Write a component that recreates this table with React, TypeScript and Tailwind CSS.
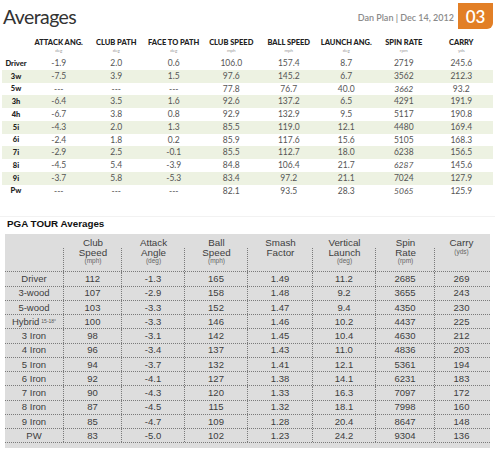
import React from 'react'

const topHeaders = [
    ["ATTACK ANG.", "deg"],
    ["CLUB PATH", "deg"],
    ["FACE TO PATH", "deg"],
    ["CLUB SPEED", "mph"],
    ["BALL SPEED", "mph"],
    ["LAUNCH ANG.", "deg"],
    ["SPIN RATE", "rpm"],
    ["CARRY", "yds"],
]

const clubs = [
    ["Driver", "-1.9", "2.0", "0.6", "106.0", "157.4", "8.7", "2719", "245.6"],
    ["3w", "-7.5", "3.9", "1.5", "97.6", "145.2", "6.7", "3562", "212.3"],
    ["5w", "---", "---", "---", "77.8", "76.7", "40.0", "*3662", "93.2"],
    ["3h", "-6.4", "3.5", "1.6", "92.6", "137.2", "6.5", "4291", "191.9"],
    ["4h", "-6.7", "3.8", "0.8", "92.9", "132.9", "9.5", "5117", "190.8"],
    ["5i", "-4.3", "2.0", "1.3", "85.5", "119.0", "12.1", "4480", "169.4"],
    ["6i", "-2.4", "1.8", "0.2", "85.9", "117.6", "15.6", "5105", "168.3"],
    ["7i", "-2.9", "2.5", "-0.1", "85.5", "112.7", "18.0", "6238", "156.5"],
    ["8i", "-4.5", "5.4", "-3.9", "84.8", "106.4", "21.7", "*6287", "145.6"],
    ["9i", "-3.7", "5.8", "-5.3", "83.4", "97.2", "21.1", "7024", "127.9"],
    ["Pw", "---", "---", "---", "82.1", "93.5", "28.3", "*5065", "125.9"],
]

const pgaHeaders: [string[], string][] = [
    [["Club", "Speed"], "(mph)"],
    [["Attack", "Angle"], "(deg)"],
    [["Ball", "Speed"], "(mph)"],
    [["Smash", "Factor"], ""],
    [["Vertical", "Launch"], "(deg)"],
    [["Spin", "Rate"], "(rpm)"],
    [["Carry"], "(yds)"],
]

const pgaRows = [
    ["Driver", "112", "-1.3", "165", "1.49", "11.2", "2685", "269"],
    ["3-wood", "107", "-2.9", "158", "1.48", "9.2", "3655", "243"],
    ["5-wood", "103", "-3.3", "152", "1.47", "9.4", "4350", "230"],
    ["Hybrid", "100", "-3.3", "146", "1.46", "10.2", "4437", "225"],
    ["3 Iron", "98", "-3.1", "142", "1.45", "10.4", "4630", "212"],
    ["4 Iron", "96", "-3.4", "137", "1.43", "11.0", "4836", "203"],
    ["5 Iron", "94", "-3.7", "132", "1.41", "12.1", "5361", "194"],
    ["6 Iron", "92", "-4.1", "127", "1.38", "14.1", "6231", "183"],
    ["7 Iron", "90", "-4.3", "120", "1.33", "16.3", "7097", "172"],
    ["8 Iron", "87", "-4.5", "115", "1.32", "18.1", "7998", "160"],
    ["9 Iron", "85", "-4.7", "109", "1.28", "20.4", "8647", "148"],
    ["PW", "83", "-5.0", "102", "1.23", "24.2", "9304", "136"],
]

const topGrid = "grid grid-cols-[28px_repeat(8,57.5px)]"
const pgaGrid = "grid grid-cols-[59px_58px_63px_63px_65px_63px_59px_53px]"
const dotted = "border-dotted border-[#7a7a7a]"

export default function App() {
    return (
        <div className="w-[495px] h-[456px] bg-white overflow-hidden font-['Lato',sans-serif]">
            {renderTitleBar()}
            {renderClubTable()}
            <div className="mt-[19px] border-t border-[#f2f2f2]" />
            {renderPgaTitle()}
            {renderPgaTable()}
        </div>
    )

    function renderTitleBar() {
        return (
            <div className="flex justify-between items-start h-[36px]">
                <h1 className="pl-[3px] pt-[5px] text-[19.5px] leading-[24px] text-[#333] tracking-[-0.6px]">Averages</h1>
                <div className="flex items-start pt-[3px] pr-[2px]">
                    <span className="mt-[9px] mr-[4px] text-[9px] leading-[12px] font-semibold text-[#8a8a8a]">Dan Plan | Dec 14, 2012</span>
                    <div className="w-[35px] h-[26px] bg-[#e27f26] rounded-br-[6px] flex items-center justify-center text-white text-[17px] font-semibold leading-none">03</div>
                </div>
            </div>
        )
    }

    function renderClubTable() {
        return (
            <div className="px-[2px]">
                <div className={topGrid + " h-[21px]"}>
                    <div />
                    {topHeaders.map(([label, unit]) => (
                        <div key={label} className="flex flex-col items-center pt-[2px]">
                            <span className="text-[7.5px] leading-[9px] font-black text-[#222] whitespace-nowrap">{label}</span>
                            <span className="text-[4.5px] leading-[7px] text-[#999]">{unit}</span>
                        </div>
                    ))}
                </div>
                {clubs.map((row, i) => renderClubRow(row, i))}
            </div>
        )
    }

    function renderClubRow(row: string[], i: number) {
        const striped = i % 2 == 1
        return (
            <div key={row[0]} className={topGrid + " h-[12.75px] items-center " + (striped ? "bg-[#edf2e2]" : "")}>
                <span className="text-center text-[7.5px] font-black text-[#222]">{row[0]}</span>
                {row.slice(1).map((value, j) => {
                    const italic = value.startsWith("*")
                    return (
                        <span key={j} className={"text-center text-[8.5px] text-[#555] " + (italic ? "italic" : "")}>
                            {italic ? value.slice(1) : value}
                        </span>
                    )
                })}
            </div>
        )
    }

    function renderPgaTitle() {
        return <h2 className="pl-[7px] pt-[1px] text-[9.8px] leading-[12px] font-bold text-[#111] font-['Liberation_Sans',Arial,sans-serif]">PGA TOUR Averages</h2>
    }

    function renderPgaTable() {
        return (
            <div className="ml-[5px] w-[485px] mt-[4px] pb-[5px] bg-[#dddddd] font-['Liberation_Sans',Arial,sans-serif] text-[#3d3d3d]">
                <div className={pgaGrid + " h-[38px] border-b " + dotted}>
                    <div className={"border-r mt-[14px] " + dotted} />
                    {pgaHeaders.map(([lines, unit], i) => (
                        <div key={i} className="relative flex flex-col items-center pt-[4px]">
                            {i < 6 && <div className={"absolute right-0 top-[14px] bottom-0 border-r " + dotted} />}
                            {lines.map(line => <span key={line} className="text-[9.8px] leading-[9.5px]">{line}</span>)}
                            {unit && <span className="text-[6.5px] leading-[8.5px] text-[#666]">{unit}</span>}
                        </div>
                    ))}
                </div>
                {pgaRows.map(row => renderPgaRow(row))}
            </div>
        )
    }

    function renderPgaRow(row: string[]) {
        return (
            <div key={row[0]} className={pgaGrid + " h-[14.25px] border-b items-stretch " + dotted}>
                <div className={"flex items-center justify-center border-r text-[9.5px] leading-none " + dotted}>
                    {row[0]}
                    {row[0] == "Hybrid" && <span className="ml-[2px] text-[5px] text-[#555]">15-18°</span>}
                </div>
                {row.slice(1).map((value, j) => (
                    <div key={j} className={"flex items-center justify-center text-[9.5px] leading-none " + (j < 6 ? "border-r " + dotted : "")}>
                        {value}
                    </div>
                ))}
            </div>
        )
    }
}
